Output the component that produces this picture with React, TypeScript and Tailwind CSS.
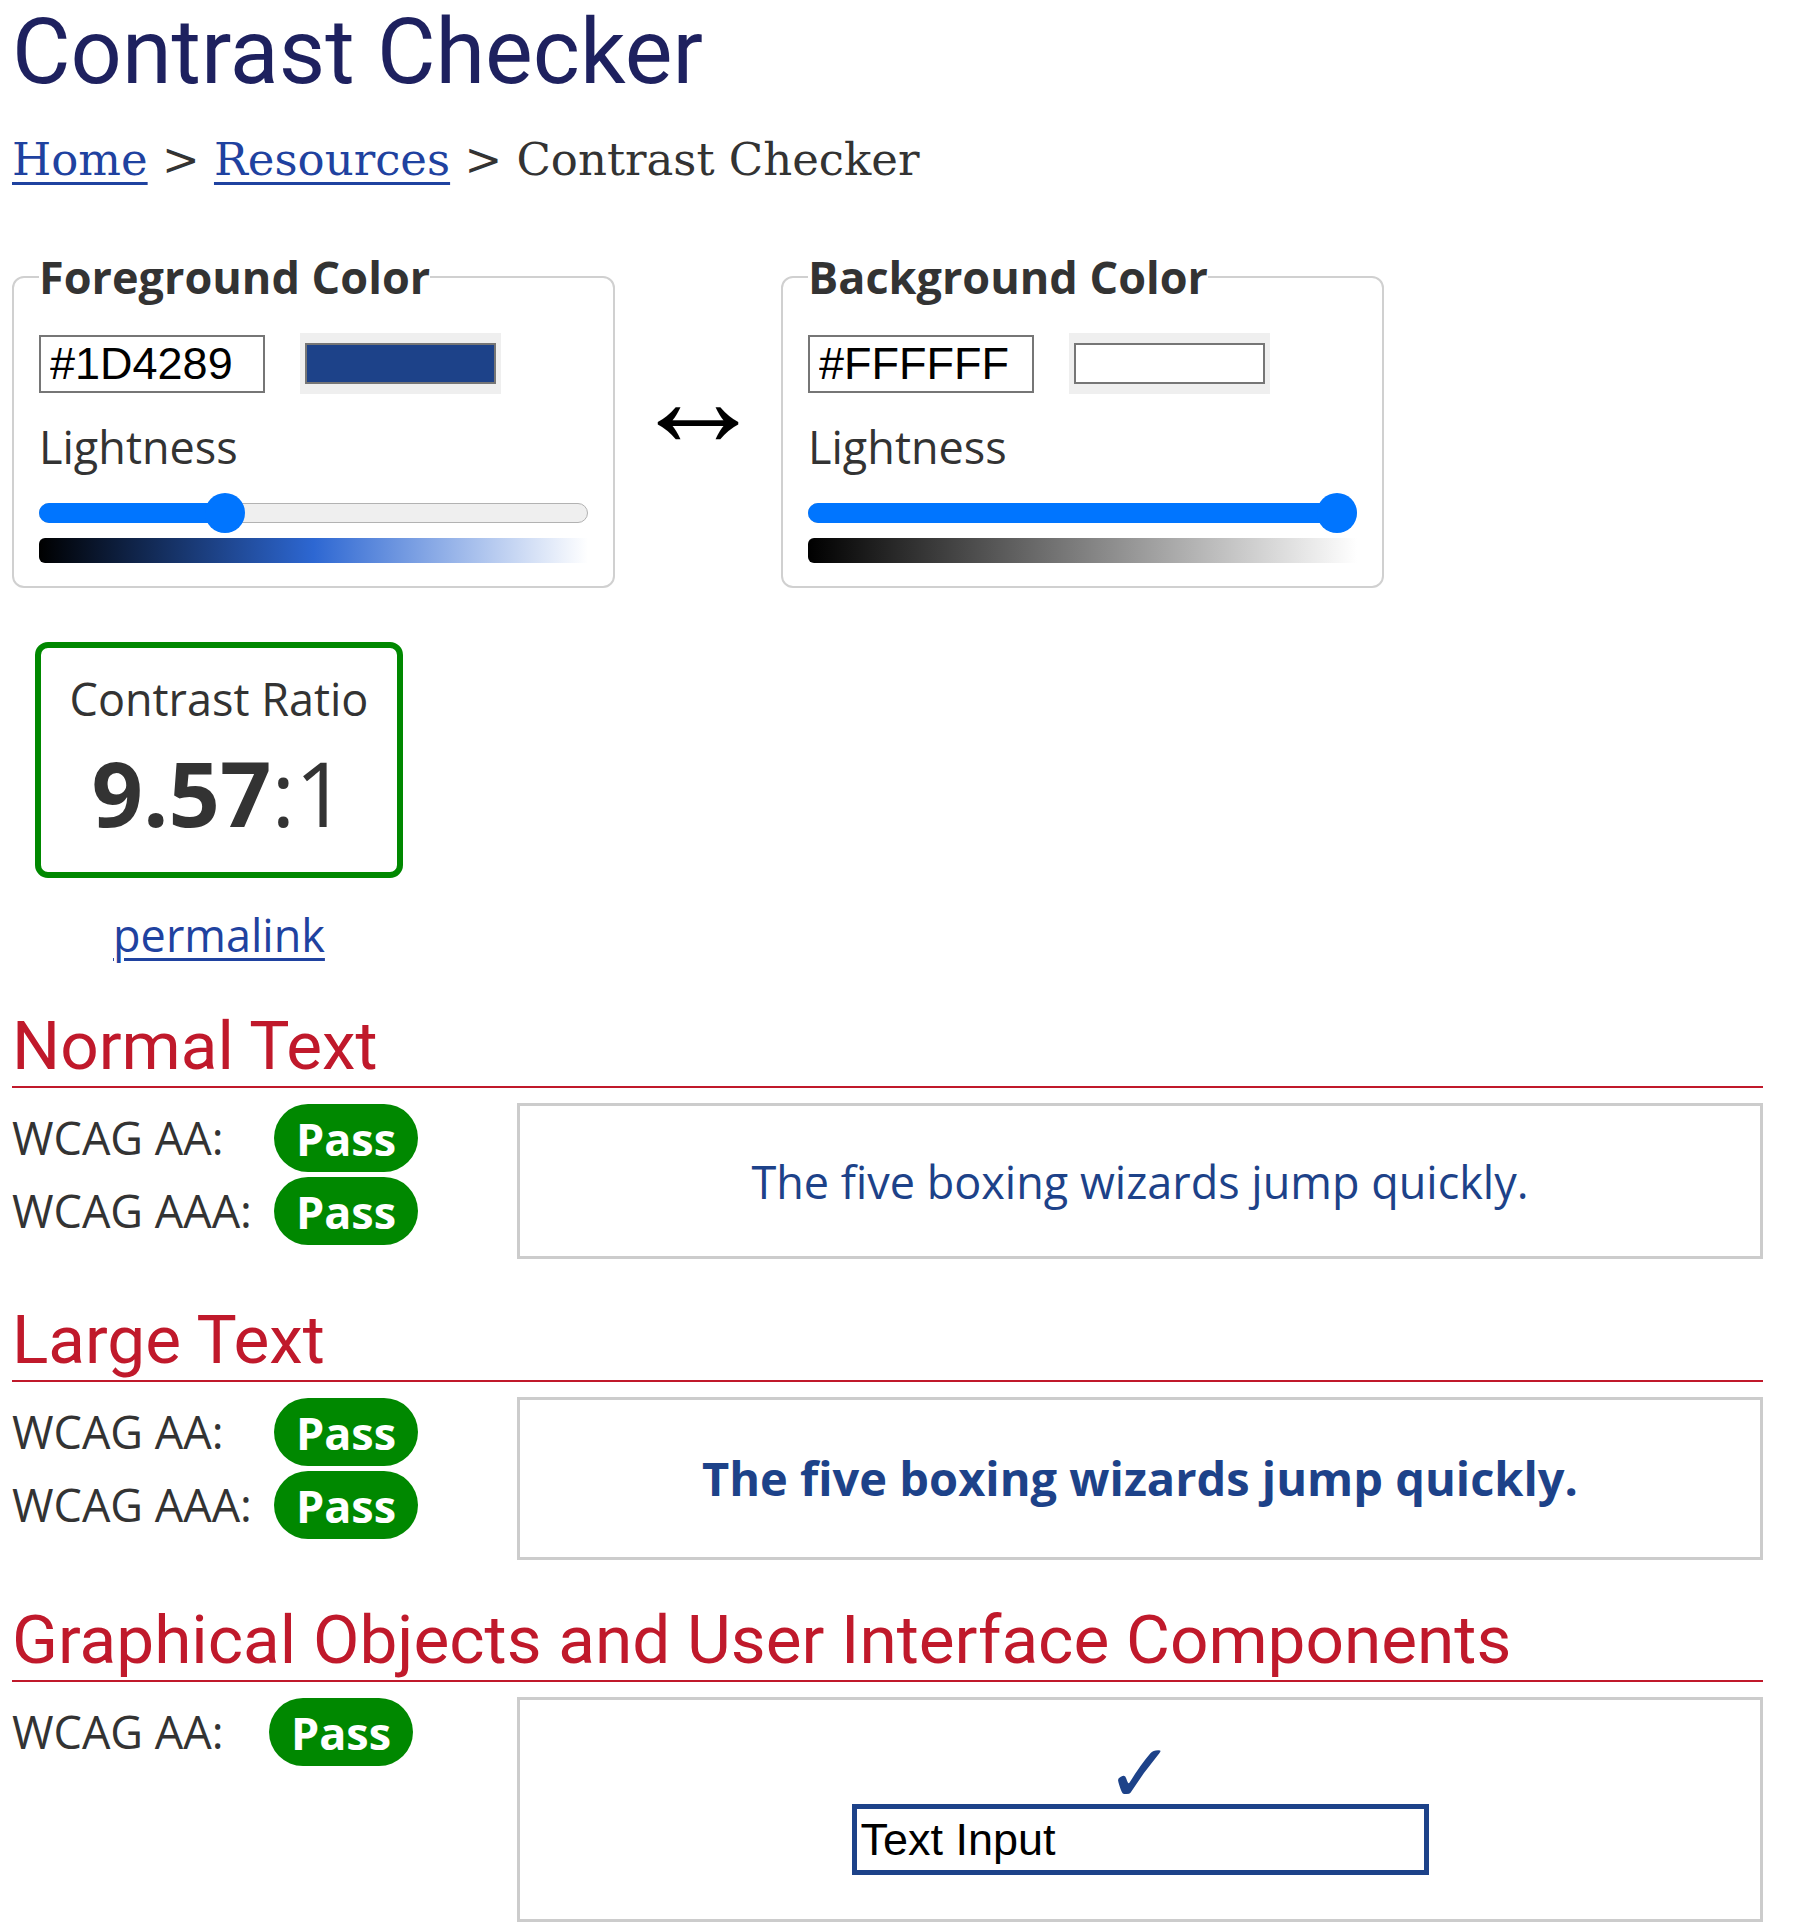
const colors = [
  {
    legend: 'Foreground Color',
    hex: '#1D4289',
    swatch: 'bg-[#1D4289]',
    light: 0.3255,
    grad: 'bg-[linear-gradient(to_right,#000,#2d67d2,#fff)]',
  },
  {
    legend: 'Background Color',
    hex: '#FFFFFF',
    swatch: 'bg-white',
    light: 1,
    grad: 'bg-[linear-gradient(to_right,#000,#fff)]',
  },
]

function ColorBox({ c }: { c: (typeof colors)[number] }) {
  return (
    <fieldset className="w-[603px] rounded-[12px] border-2 border-[#d0d0d0] px-[25px] pt-[26px] pb-[23px]">
      <legend className="font-bold leading-[61px] text-[#333]">{c.legend}</legend>
      <div className="flex items-center gap-[35px]">
        <input
          readOnly
          value={c.hex}
          className="h-[58px] w-[226px] border-2 border-[#767676] pl-[9px] font-['Liberation_Sans',Arial,sans-serif] text-[45px] text-black outline-none"
        />
        <div className="h-[61px] w-[201px] bg-[#efefef] px-[5px] py-[10px]">
          <div className={`h-full border-2 border-[#767676] ${c.swatch}`} />
        </div>
      </div>
      <div className="mt-[23px] leading-[60px]">Lightness</div>
      <div className="relative mt-[16px] h-[40px]">
        {/* track */}
        <div className="absolute inset-x-0 top-[10px] h-[20px] rounded-full border border-[#b2b2b2] bg-[#efefef]" />
        <div
          className="absolute left-0 top-[10px] h-[20px] rounded-full bg-[#0075ff]"
          style={{ width: `calc(20px + ${c.light} * (100% - 40px))` }}
        />
        <div
          className="absolute top-0 h-[40px] w-[40px] rounded-full bg-[#0075ff]"
          style={{ left: `calc(${c.light} * (100% - 40px))` }}
        />
      </div>
      <div className={`mt-[5px] h-[25px] rounded-l-[6px] ${c.grad}`} />
    </fieldset>
  )
}

function Pass() {
  return (
    <span className="inline-flex h-[68px] w-[144px] items-center justify-center rounded-full bg-[#008800] font-bold leading-none text-white">
      Pass
    </span>
  )
}

function Heading({ children }: { children: React.ReactNode }) {
  return (
    <h2 className="border-b-2 border-[#c0192b] pb-[2px] font-['Roboto',sans-serif] text-[67.5px] leading-[77px] text-[#c0192b]">
      {children}
    </h2>
  )
}

function Results({ levels, labelW }: { levels: string[]; labelW: string }) {
  return (
    <div className="flex w-[505px] shrink-0 flex-col gap-[5px] pt-[1px]">
      {levels.map(l => (
        <div key={l} className="flex h-[68px] items-center">
          <span className={labelW}>{l}</span>
          <Pass />
        </div>
      ))}
    </div>
  )
}

export default function App() {
  return (
    <div className="min-h-screen bg-white pl-[12px] pr-[37px] pb-[4px] font-['Open_Sans',sans-serif] text-[45px] leading-[60px] text-[#333]">
      <h1 className="font-['Roboto',sans-serif] text-[90px] leading-[106px] text-[#1e215f]">
        Contrast Checker
      </h1>

      {/* Breadcrumb */}
      <nav className="mt-[28px] font-['DejaVu_Serif',serif] text-[45px] leading-[52px] text-[#333]">
        <a href="#" className="text-[#1f42a0] underline decoration-[3px] underline-offset-[7px]">Home</a>
        {' > '}
        <a href="#" className="text-[#1f42a0] underline decoration-[3px] underline-offset-[7px]">Resources</a>
        {' > Contrast Checker'}
      </nav>

      {/* Color pickers */}
      <div className="mt-[60px] flex items-start">
        <ColorBox c={colors[0]} />
        <div className="flex w-[166px] shrink-0 justify-center pt-[86px]">
          <span className="font-['Liberation_Serif',serif] text-[136px] leading-none text-black">↔</span>
        </div>
        <ColorBox c={colors[1]} />
      </div>

      {/* Ratio */}
      <div className="ml-[23px] mt-[54px] w-[368px] text-center">
        <div className="rounded-[13px] border-[6px] border-[#008800] pt-[21px] pb-[20px]">
          <div className="leading-[60px]">Contrast Ratio</div>
          <div className="mt-[3px] text-[90px] leading-[120px]">
            <span className="font-bold">9.57</span>:1
          </div>
        </div>
        <a href="#" className="mt-[24px] inline-block leading-[66px] text-[#1f42a0] underline decoration-[3px] underline-offset-[6px]">
          permalink
        </a>
      </div>

      {/* Normal text */}
      <section className="mt-[39px]">
        <Heading>Normal Text</Heading>
        <div className="mt-[15px] flex items-start">
          <Results levels={['WCAG AA:', 'WCAG AAA:']} labelW="w-[262px]" />
          <div className="flex-1 border-[3px] border-[#cccccc] pt-[46px] pb-[44px] text-center text-[#1D4289]">
            The five boxing wizards jump quickly.
          </div>
        </div>
      </section>

      {/* Large text */}
      <section className="mt-[42px]">
        <Heading>Large Text</Heading>
        <div className="mt-[15px] flex items-start">
          <Results levels={['WCAG AA:', 'WCAG AAA:']} labelW="w-[262px]" />
          <div className="flex-1 border-[3px] border-[#cccccc] pt-[46px] pb-[46px] text-center text-[47px] font-bold leading-[65px] text-[#1D4289]">
            The five boxing wizards jump quickly.
          </div>
        </div>
      </section>

      {/* Graphical objects */}
      <section className="mt-[41px]">
        <Heading>Graphical Objects and User Interface Components</Heading>
        <div className="mt-[15px] flex items-start">
          <Results levels={['WCAG AA:']} labelW="w-[257px]" />
          <div className="flex flex-1 flex-col items-center border-[3px] border-[#cccccc] py-[44px]">
            <div className="mb-[1px] font-['DejaVu_Sans',sans-serif] text-[82px] leading-[59px] text-[#1D4289]">✓</div>
            <input
              readOnly
              value="Text Input"
              className="h-[71px] w-[577px] border-[5px] border-[#1D4289] pl-[4px] font-['Liberation_Sans',Arial,sans-serif] text-[45px] text-black outline-none"
            />
          </div>
        </div>
      </section>
    </div>
  )
}
